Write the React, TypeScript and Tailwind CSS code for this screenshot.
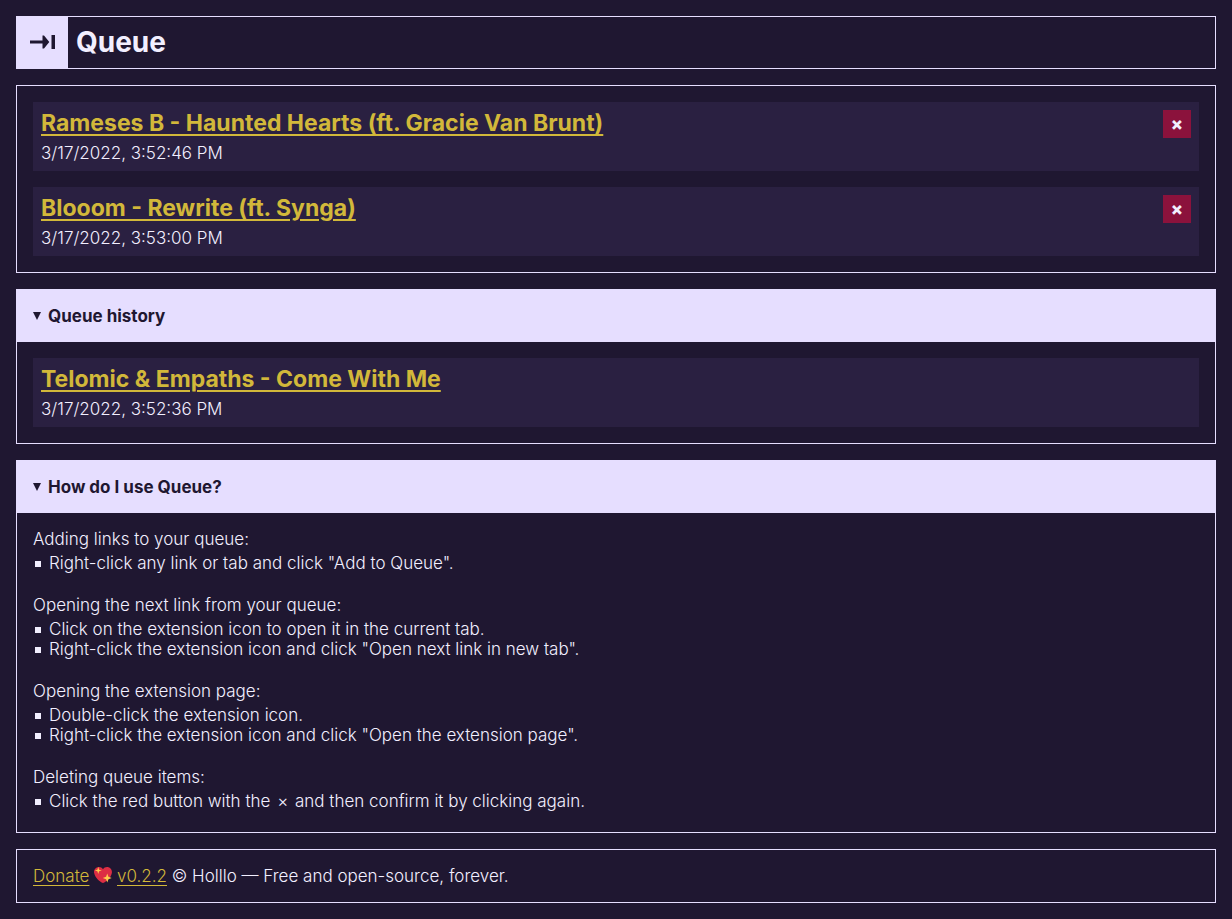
import type { ReactNode } from 'react';

type Item = { title: string; date: string };

const queue: Item[] = [
  { title: 'Rameses B - Haunted Hearts (ft. Gracie Van Brunt)', date: '3/17/2022, 3:52:46 PM' },
  { title: 'Blooom - Rewrite (ft. Synga)', date: '3/17/2022, 3:53:00 PM' },
];

const past: Item[] = [{ title: 'Telomic & Empaths - Come With Me', date: '3/17/2022, 3:52:36 PM' }];

const help: { title: string; lines: ReactNode[] }[] = [
  { title: 'Adding links to your queue:', lines: ['Right-click any link or tab and click "Add to Queue".'] },
  {
    title: 'Opening the next link from your queue:',
    lines: [
      'Click on the extension icon to open it in the current tab.',
      'Right-click the extension icon and click "Open next link in new tab".',
    ],
  },
  {
    title: 'Opening the extension page:',
    lines: ['Double-click the extension icon.', 'Right-click the extension icon and click "Open the extension page".'],
  },
  {
    title: 'Deleting queue items:',
    lines: [
      <>
        Click the red button with the <span className="px-0.5">×</span> and then confirm it by clicking again.
      </>,
    ],
  },
];

function QueueItem({ item, removable }: { item: Item; removable?: boolean }) {
  return (
    <li className="flex items-start justify-between gap-4 bg-[#2a2041] p-2">
      <div>
        <a
          href="#"
          className="block text-[23px] leading-[26px] font-bold text-[#d2b83a] underline decoration-2 underline-offset-3"
        >
          {item.title}
        </a>
        <p className="mt-[7px]">{item.date}</p>
      </div>
      {removable && (
        <button
          type="button"
          aria-label={`Remove ${item.title}`}
          className="flex size-7 shrink-0 items-center justify-center bg-[#8b123c] text-lg font-extrabold text-[#f2efff]"
        >
          ×
        </button>
      )}
    </li>
  );
}

function Panel({ title, children }: { title: string; children: ReactNode }) {
  return (
    <details open className="group border border-[#e6deff]">
      <summary className="-mt-px flex cursor-pointer list-none items-center gap-[7px] bg-[#e6deff] px-4 pt-[17px] pb-4 font-bold text-[#1f1731]">
        <svg viewBox="0 0 8 8" aria-hidden="true" className="size-2 -rotate-90 fill-current group-open:rotate-0">
          <path d="M0 0h8L4 8z" />
        </svg>
        {title}
      </summary>
      {children}
    </details>
  );
}

function QueueLogo() {
  return (
    <svg viewBox="0 0 25 14" aria-hidden="true" className="h-3.5 w-[25px] fill-[#1f1731]">
      <path d="M0 5.500h12.500V.500h1.500L19.300 7 14 13.500h-1.500v-5H0zM21.500 0H25v14h-3.500z" />
    </svg>
  );
}

function SparklingHeart() {
  return (
    <svg viewBox="0 0 36 36" role="img" aria-label="Sparkling heart" className="inline-block size-[18px] align-[-2px]">
      <path
        fill="#dd2e44"
        d="M35.9 11.8c0-5.4-4.4-9.8-9.8-9.8-3.4 0-6.4 1.7-8.1 4.4C16.200 3.700 13.200 2 9.900 2 4.400 2 0 6.400 0 11.800c0 .8.100 1.500.300 2.200C1.700 22.500 11.200 31.600 18 34c6.800-2.400 16.300-11.500 17.700-20 .1-.7.2-1.400.2-2.200z"
      />
      <path
        fill="#ffcc4d"
        d="M8.500 2l1.700 5.300L15.500 9l-5.300 1.700L8.500 16l-1.700-5.300L1.500 9l5.300-1.700zM26.500 15l2.300 6.700 6.700 2.300-6.700 2.300-2.300 6.700-2.300-6.700-6.700-2.300 6.700-2.300z"
      />
    </svg>
  );
}

const link = 'text-[#d2b83a] underline decoration-1 underline-offset-3';

export default function App() {
  return (
    <div className="flex min-h-screen flex-col gap-4 bg-[#1f1731] p-4 font-['Inter',sans-serif] text-[17px] leading-5 font-light text-[#f2efff]">
      <header className="flex items-stretch border border-[#e6deff]">
        <span className="flex h-[51px] w-[51px] items-center justify-center bg-[#e6deff] pb-0.5">
          <QueueLogo />
        </span>
        <h1 className="self-center pb-0.5 pl-2 text-[28px] leading-8 font-bold">Queue</h1>
      </header>

      <main className="flex flex-col gap-4">
        <ul className="flex flex-col gap-4 border border-[#e6deff] p-4">
          {queue.map((item) => (
            <QueueItem key={item.title} item={item} removable />
          ))}
        </ul>

        <Panel title="Queue history">
          <ul className="flex flex-col gap-4 p-4">
            {past.map((item) => (
              <QueueItem key={item.title} item={item} />
            ))}
          </ul>
        </Panel>

        <Panel title="How do I use Queue?">
          <div className="flex flex-col gap-[22px] px-4 pt-4 pb-[21px]">
            {help.map((group) => (
              <section key={group.title}>
                <p>{group.title}</p>
                <ul className="mt-1">
                  {group.lines.map((line, index) => (
                    <li
                      key={index}
                      className="flex items-center gap-2 pl-0.5 before:mt-0.5 before:size-1.5 before:shrink-0 before:bg-[#f2efff]"
                    >
                      <span>{line}</span>
                    </li>
                  ))}
                </ul>
              </section>
            ))}
          </div>
        </Panel>
      </main>

      <footer className="border border-[#e6deff] p-4">
        <p>
          <a href="#" className={link}>Donate</a> <SparklingHeart /> <a href="#" className={link}>v0.2.2</a> © Holllo — Free and
          open-source, forever.
        </p>
      </footer>
    </div>
  );
}
